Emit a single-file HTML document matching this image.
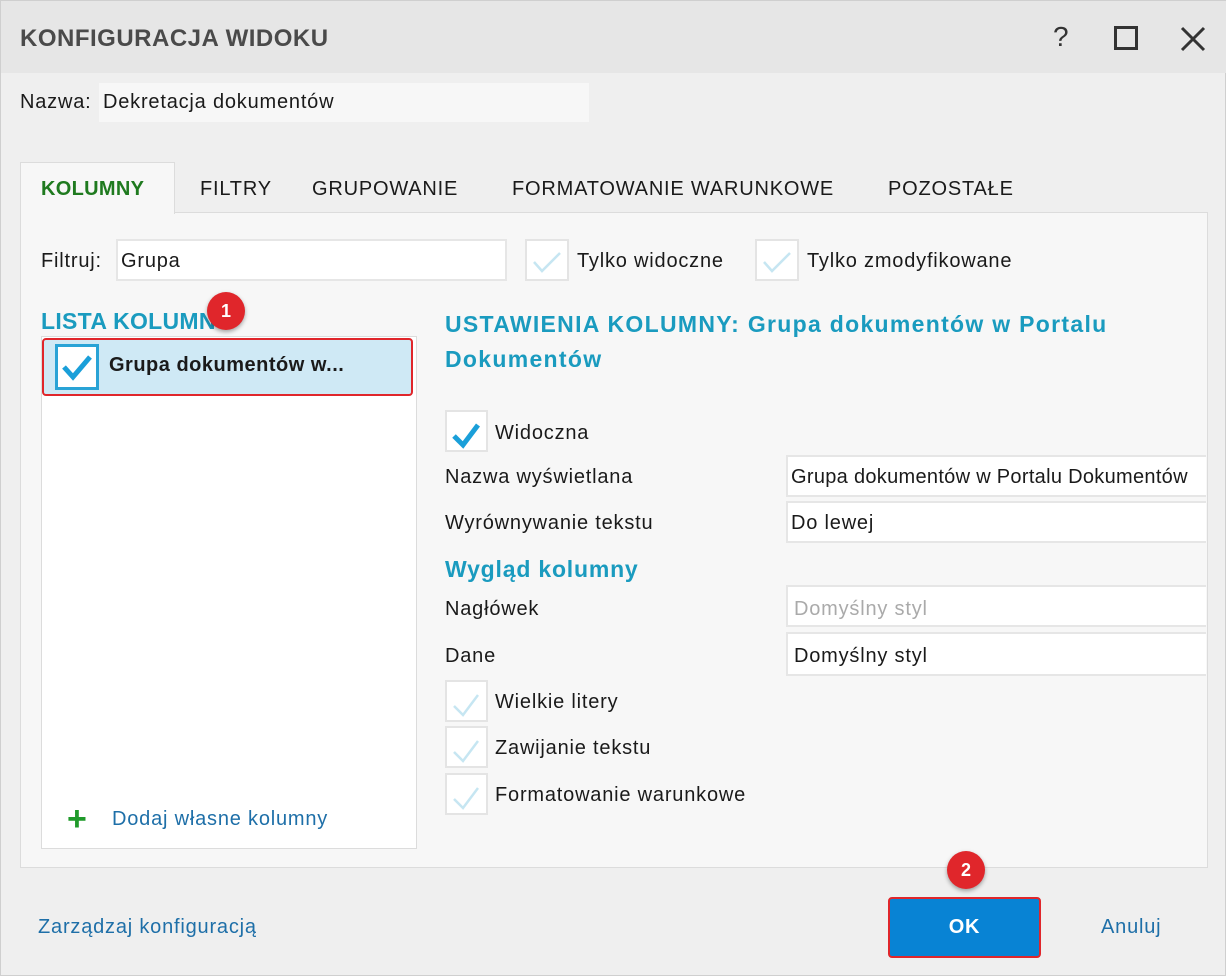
<!DOCTYPE html>
<html><head><meta charset="utf-8"><style>
*{box-sizing:border-box;margin:0;padding:0}
body{width:1226px;height:976px;background:#efefef;font-family:"Liberation Sans",sans-serif;font-size:20px;letter-spacing:.8px;color:#1a1a1a;position:relative;overflow:hidden;border:1px solid #cfcfcf}
.a{position:absolute;white-space:nowrap}
.title{left:0;top:0;width:1226px;height:72px;background:#e6e6e6}
.inp{position:absolute;background:#fff;border:2px solid #e6e6e6}
.cb{position:absolute;width:28px;height:42px;background:#fff;border:2px solid #e4e4e4}
.cb svg{position:absolute;left:4px;top:7px}
.blue{color:#1a9bbf;font-weight:bold}
.badge{position:absolute;width:38px;height:38px;border-radius:50%;background:#e0262b;color:#fff;font-weight:bold;font-size:18px;letter-spacing:0;text-align:center;line-height:38px;box-shadow:0 2px 4px rgba(0,0,0,.35)}
</style></head><body>
<div class="a title"></div>
<div class="a" style="left:19px;top:24px;font-size:24px;letter-spacing:.5px;font-weight:bold;color:#4a4a4a">KONFIGURACJA WIDOKU</div>
<div class="a" style="left:1052px;top:20px;font-size:28px;color:#333">?</div>
<div class="a" style="left:1113px;top:25px;width:24px;height:24px;border:3px solid #333"></div>
<svg class="a" style="left:1179px;top:25px" width="26" height="26"><path d="M2 2L24 24M24 2L2 24" stroke="#333" stroke-width="3"/></svg>

<div class="a" style="left:19px;top:90px">Nazwa:</div>
<div class="a" style="left:98px;top:82px;width:490px;height:39px;background:#f7f7f7"></div>
<div class="a" style="left:102px;top:90px">Dekretacja dokumentów</div>

<div class="a" style="left:19px;top:211px;width:1188px;height:656px;background:#f7f7f7;border:1px solid #dcdcdc"></div>
<div class="a" style="left:19px;top:161px;width:155px;height:52px;background:#f7f7f7;border:1px solid #dcdcdc;border-bottom:none"></div>
<div class="a" style="left:40px;top:177px;color:#1f7a1f;font-weight:bold;letter-spacing:.3px">KOLUMNY</div>
<div class="a" style="left:199px;top:177px">FILTRY</div>
<div class="a" style="left:311px;top:177px">GRUPOWANIE</div>
<div class="a" style="left:511px;top:177px">FORMATOWANIE WARUNKOWE</div>
<div class="a" style="left:887px;top:177px">POZOSTAŁE</div>

<div class="a" style="left:40px;top:249px">Filtruj:</div>
<div class="inp" style="left:115px;top:238px;width:391px;height:42px"></div>
<div class="a" style="left:120px;top:249px">Grupa</div>
<div class="cb" style="left:524px;top:238px;width:44px"><svg width="32" height="26"><path d="M3 14L11 23L29 5" fill="none" stroke="#c6e6f2" stroke-width="2.5"/></svg></div>
<div class="a" style="left:576px;top:249px">Tylko widoczne</div>
<div class="cb" style="left:754px;top:238px;width:44px"><svg width="32" height="26"><path d="M3 14L11 23L29 5" fill="none" stroke="#c6e6f2" stroke-width="2.5"/></svg></div>
<div class="a" style="left:806px;top:249px">Tylko zmodyfikowane</div>

<div class="a blue" style="left:40px;top:307px;font-size:23px;letter-spacing:.3px">LISTA KOLUMN</div>
<div class="a" style="left:40px;top:335px;width:376px;height:513px;background:#fff;border:1px solid #dcdcdc"></div>
<div class="a" style="left:41px;top:337px;width:371px;height:58px;background:#cfe9f5;border:2px solid #e0262b;border-radius:4px"></div>
<div class="a" style="left:54px;top:343px;width:44px;height:46px;background:#fff;border:3px solid #29a3d6"></div>
<svg class="a" style="left:60px;top:352px" width="32" height="28"><path d="M3 14L12 24L29 4" fill="none" stroke="#1a9fd9" stroke-width="5"/></svg>
<div class="a" style="left:108px;top:353px;font-weight:bold;letter-spacing:.5px">Grupa dokumentów w...</div>
<div class="badge" style="left:206px;top:291px">1</div>
<div class="a" style="left:66px;top:806px;font-size:34px;font-weight:bold;color:#1f9a2a;line-height:24px">+</div>
<div class="a" style="left:111px;top:807px;color:#1e6fa8">Dodaj własne kolumny</div>

<div class="a blue" style="left:444px;top:306px;font-size:23px;letter-spacing:1.3px;line-height:35px">USTAWIENIA KOLUMNY: Grupa dokumentów w Portalu<br>Dokumentów</div>
<div class="cb" style="left:444px;top:409px;width:43px"><svg width="32" height="30"><path d="M3 17L12 26L27 6" fill="none" stroke="#1a9fd9" stroke-width="5"/></svg></div>
<div class="a" style="left:494px;top:421px">Widoczna</div>
<div class="a" style="left:444px;top:465px">Nazwa wyświetlana</div>
<div class="inp" style="left:785px;top:454px;width:420px;height:42px;border-right:none"></div>
<div class="a" style="left:790px;top:465px;width:408px;overflow:hidden;letter-spacing:.3px">Grupa dokumentów w Portalu Dokumentów</div>
<div class="a" style="left:444px;top:511px">Wyrównywanie tekstu</div>
<div class="inp" style="left:785px;top:500px;width:420px;height:42px;border-right:none"></div>
<div class="a" style="left:790px;top:511px">Do lewej</div>
<div class="a blue" style="left:444px;top:555px;font-size:23px;letter-spacing:.8px">Wygląd kolumny</div>
<div class="a" style="left:444px;top:597px">Nagłówek</div>
<div class="inp" style="left:785px;top:584px;width:420px;height:42px;border-right:none"></div>
<div class="a" style="left:793px;top:597px;color:#aaa">Domyślny styl</div>
<div class="a" style="left:444px;top:644px">Dane</div>
<div class="inp" style="left:785px;top:631px;width:420px;height:44px;border-right:none"></div>
<div class="a" style="left:793px;top:644px">Domyślny styl</div>
<div class="cb" style="left:444px;top:679px;width:43px"><svg width="32" height="30"><path d="M3 17L12 26L27 6" fill="none" stroke="#c6e6f2" stroke-width="2.5"/></svg></div>
<div class="a" style="left:494px;top:690px">Wielkie litery</div>
<div class="cb" style="left:444px;top:725px;width:43px"><svg width="32" height="30"><path d="M3 17L12 26L27 6" fill="none" stroke="#c6e6f2" stroke-width="2.5"/></svg></div>
<div class="a" style="left:494px;top:736px">Zawijanie tekstu</div>
<div class="cb" style="left:444px;top:772px;width:43px"><svg width="32" height="30"><path d="M3 17L12 26L27 6" fill="none" stroke="#c6e6f2" stroke-width="2.5"/></svg></div>
<div class="a" style="left:494px;top:783px">Formatowanie warunkowe</div>

<div class="a" style="left:37px;top:915px;color:#1e6fa8">Zarządzaj konfiguracją</div>
<div class="a" style="left:887px;top:896px;width:153px;height:61px;background:#0883d4;border:2px solid #e0262b;border-radius:4px;color:#fff;font-weight:bold;text-align:center;line-height:57px;font-size:20px">OK</div>
<div class="badge" style="left:946px;top:850px">2</div>
<div class="a" style="left:1100px;top:915px;color:#1e6fa8">Anuluj</div>
</body></html>
